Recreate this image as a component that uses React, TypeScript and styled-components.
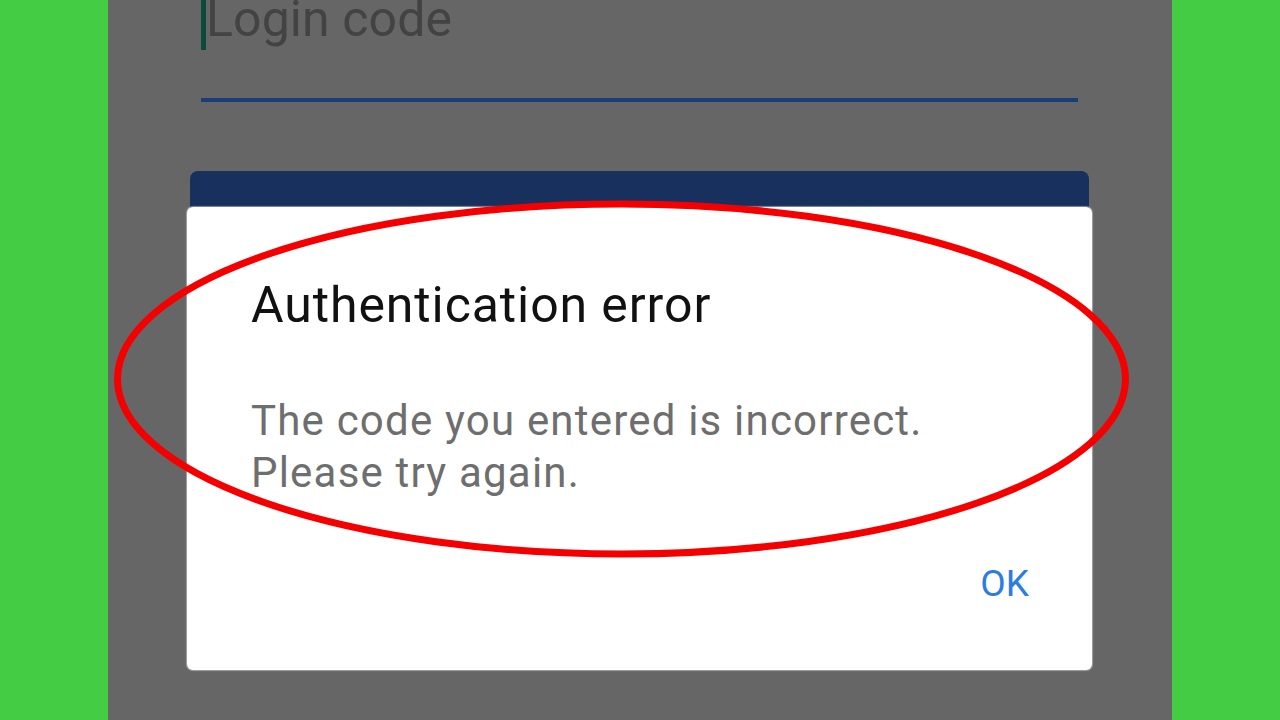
import React from "react";
import styled, { createGlobalStyle } from "styled-components";

const Global = createGlobalStyle`
  html, body { margin: 0; padding: 0; }
  body {
    background: #45cc45;
    font-family: Roboto, "Noto Sans", "Liberation Sans", sans-serif;
    width: 1280px;
    height: 720px;
    overflow: hidden;
  }
`;

const Phone = styled.div`
  position: relative;
  width: 1064px;
  height: 720px;
  margin: 0 auto;
  background: #666666;
  overflow: hidden;
`;

const Field = styled.div`
  margin: 0 94px 0 93px;
  height: 98px;
  border-bottom: 4px solid #1b3c75;
  box-sizing: content-box;
  display: flex;
  align-items: flex-start;
`;

const Cursor = styled.span`
  width: 5px;
  height: 50px;
  background: #0d4a3c;
  flex: none;
`;

const Placeholder = styled.span`
  font-size: 50px;
  line-height: 50px;
  color: #434343;
  margin-top: -6px;
  letter-spacing: 0.1px;
`;

const PrimaryButton = styled.div`
  margin: 69px 83px 0 82px;
  height: 120px;
  background: #17305e;
  border-radius: 8px;
`;

const Dialog = styled.div`
  position: absolute;
  left: 79px;
  top: 207px;
  width: 905px;
  height: 463px;
  background: #ffffff;
  border-radius: 6px;
  box-shadow: 0 0 1px 1px rgba(200, 200, 200, 0.6);
  box-sizing: border-box;
  padding: 0 63px 0 64px;
  display: flex;
  flex-direction: column;
`;

const Title = styled.h2`
  margin: 70px 0 0 0;
  font-weight: 400;
  font-size: 50px;
  line-height: 56px;
  color: #111111;
  letter-spacing: 0.9px;
`;

const Message = styled.p`
  margin: 62px 0 0 0;
  font-size: 42px;
  line-height: 52px;
  color: #6e6e6e;
  letter-spacing: 1.2px;
`;

const Actions = styled.div`
  margin-top: 63px;
  display: flex;
  justify-content: flex-end;
`;

const OkButton = styled.span`
  font-size: 37px;
  line-height: 44px;
  color: #2b7de0;
`;

const Annotation = styled.svg`
  position: absolute;
  left: 0;
  top: 0;
  pointer-events: none;
`;

export default function App() {
  return (
    <>
      <Global />
      <Phone>
        <Field>
          <Cursor />
          <Placeholder>Login code</Placeholder>
        </Field>
        <PrimaryButton />
        <Dialog>
          <Title>Authentication error</Title>
          <Message>
            The code you entered is incorrect.
            <br />
            Please try again.
          </Message>
          <Actions>
            <OkButton>OK</OkButton>
          </Actions>
        </Dialog>
      </Phone>
      <Annotation width="1280" height="720" viewBox="0 0 1280 720">
        <ellipse cx="621.5" cy="379" rx="504" ry="175" fill="none" stroke="#f50000" strokeWidth="7" />
      </Annotation>
    </>
  );
}
